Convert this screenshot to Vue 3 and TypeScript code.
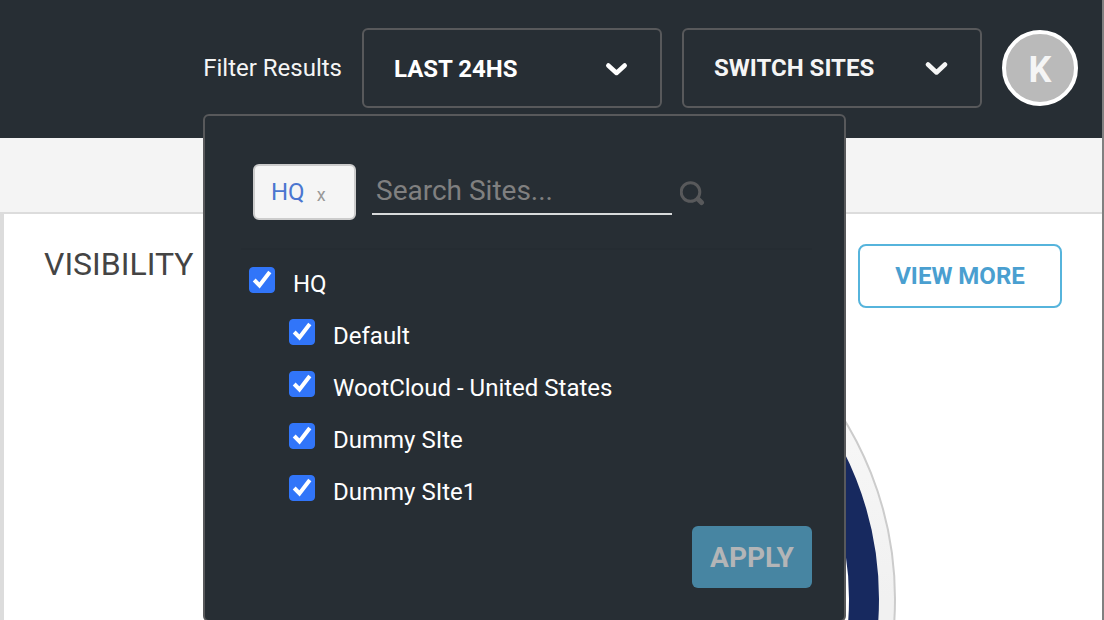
<script setup lang="ts">
import { computed, ref } from 'vue'

interface Site {
  id: string
  name: string
  nested: boolean
  checked: boolean
}

const sites = ref<Site[]>([
  { id: 'hq', name: 'HQ', nested: false, checked: true },
  { id: 'default', name: 'Default', nested: true, checked: true },
  { id: 'wootcloud', name: 'WootCloud - United States', nested: true, checked: true },
  { id: 'dummy', name: 'Dummy SIte', nested: true, checked: true },
  { id: 'dummy1', name: 'Dummy SIte1', nested: true, checked: true },
])
const query = ref('')
const selected = ref(['HQ'])
const visibleSites = computed(() =>
  sites.value.filter((s) => s.name.toLowerCase().includes(query.value.toLowerCase())),
)

function removeTag(tag: string): void {
  selected.value = selected.value.filter((t) => t !== tag)
}
</script>

<template>
  <div class="page">
    <header class="topbar">
      <span class="filter-label">Filter Results</span>
      <button type="button" class="dropdown">
        <span>LAST 24HS</span>
        <svg class="chevron" viewBox="0 0 24 16" aria-hidden="true"><path d="M4.300 4.500 L12.500 12 L20.700 4.500" /></svg>
      </button>
      <button type="button" class="dropdown sites-toggle" aria-expanded="true">
        <span>SWITCH SITES</span>
        <svg class="chevron" viewBox="0 0 24 16" aria-hidden="true"><path d="M4 4.500 L12.500 12.500 L21 4.500" /></svg>
      </button>
      <button type="button" class="avatar">K</button>

      <form class="menu" @submit.prevent>
        <div class="search-row">
          <span v-for="tag in selected" :key="tag" class="tag">
            {{ tag }}
            <button type="button" class="tag-remove" :aria-label="`Remove ${tag}`" @click="removeTag(tag)">x</button>
          </span>
          <input v-model="query" class="search" type="text" placeholder="Search Sites..." aria-label="Search Sites" />
          <svg class="magnifier" viewBox="0 0 26 26" aria-hidden="true">
            <circle cx="10.500" cy="12" r="9.300" />
            <path d="M18 19 L21.500 22.500" />
          </svg>
        </div>
        <ul class="site-list">
          <li v-for="site in visibleSites" :key="site.id" :class="{ nested: site.nested }">
            <label class="site">
              <span class="tick">
                <input v-model="site.checked" type="checkbox" />
                <svg v-if="site.checked" viewBox="0 0 26 26" aria-hidden="true"><path d="M5.200 13 L10.500 18.500 L20.800 5" /></svg>
              </span>
              <span class="site-name">{{ site.name }}</span>
            </label>
          </li>
        </ul>
        <button type="submit" class="apply">APPLY</button>
      </form>
    </header>

    <div class="subbar"></div>

    <main class="card">
      <div class="card-head">
        <h1>VISIBILITY</h1>
        <button type="button" class="view-more">VIEW MORE</button>
      </div>
      <svg class="chart" viewBox="0 0 686 686" aria-hidden="true">
        <defs>
          <linearGradient id="ring" x1="0" y1="0" x2="0" y2="1">
            <stop offset="0" stop-color="#fcfcfc" />
            <stop offset="0.5" stop-color="#f1f1f1" />
          </linearGradient>
        </defs>
        <circle cx="343" cy="343" r="342" fill="url(#ring)" stroke="#cccccc" stroke-width="2" />
        <circle cx="343" cy="343" r="311" fill="#ffffff" stroke="#17295f" stroke-width="30" />
      </svg>
    </main>
  </div>
</template>

<style>
body {
  margin: 0;
}
</style>

<style scoped>
* {
  box-sizing: border-box;
}

.page {
  display: flex;
  flex-direction: column;
  height: 100vh;
  overflow: hidden;
  border-right: 2px solid #808080;
  background: #ffffff;
  font-family: Roboto, 'Liberation Sans', sans-serif;
  font-size: 24px;
}

button,
input {
  margin: 0;
  font-family: inherit;
}

button {
  cursor: pointer;
}

.topbar {
  position: relative;
  z-index: 1;
  flex: none;
  display: flex;
  justify-content: flex-end;
  align-items: flex-start;
  gap: 20px;
  padding: 28px 24px 30px;
  background: #272e34;
  color: #f5f5f5;
}

.filter-label {
  line-height: 80px;
}

.dropdown {
  display: flex;
  justify-content: space-between;
  align-items: center;
  width: 300px;
  height: 80px;
  padding: 2px 32px 0 30px;
  border: 2px solid #58595b;
  border-radius: 6px;
  background: transparent;
  color: #ffffff;
  font-size: 24px;
  font-weight: 700;
}

.sites-toggle {
  padding-top: 0;
  color: #f5f5f5;
}

.chevron {
  width: 24px;
  height: 16px;
  fill: none;
  stroke: currentColor;
  stroke-width: 4.5;
  stroke-linecap: round;
  stroke-linejoin: round;
}

.avatar {
  width: 76px;
  height: 76px;
  margin-top: 2px;
  padding: 4px 0 0;
  border: 4px solid #ffffff;
  border-radius: 50%;
  background: #bababa;
  color: #f5f5f5;
  font-size: 36px;
  font-weight: 700;
}

.menu {
  position: absolute;
  top: 114px;
  right: 256px;
  display: flex;
  flex-direction: column;
  width: 643px;
  padding: 48px 32px 32px;
  border: 2px solid #58595b;
  border-radius: 6px;
  background: #272e34;
}

.search-row {
  display: flex;
  align-items: flex-start;
  margin-left: 4px;
  padding: 0 0 28px 12px;
  border-bottom: 2px solid #252c32;
}

.tag {
  display: flex;
  align-items: center;
  gap: 8px;
  width: 103px;
  height: 56px;
  margin-right: 16px;
  padding-left: 16px;
  border: 2px solid #cccccc;
  border-radius: 6px;
  background: #f5f5f5;
  color: #4a76d0;
}

.tag-remove {
  padding: 4px 4px 0;
  border: 0;
  background: transparent;
  color: #999999;
  font-size: 18px;
}

.search {
  width: 300px;
  height: 51px;
  padding: 4px 4px 0;
  border: 0;
  border-bottom: 2px solid #d8dadb;
  border-radius: 0;
  outline: 0;
  background: transparent;
  color: #f5f5f5;
  font-size: 28px;
}

.search::placeholder {
  color: #808080;
  opacity: 1;
}

.magnifier {
  width: 26px;
  height: 26px;
  margin: 16px 0 0 8px;
  fill: none;
  stroke: #58595b;
  stroke-width: 3;
}

.magnifier path {
  stroke-width: 5;
  stroke-linecap: round;
}

.site-list {
  margin: 8px 0;
  padding: 0 0 0 12px;
  list-style: none;
}

.site-list li {
  height: 52px;
}

.site-list .nested {
  padding-left: 40px;
}

.site {
  display: inline-flex;
  align-items: flex-start;
  gap: 18px;
  padding-top: 9px;
  color: #ffffff;
}

.tick {
  display: grid;
  width: 26px;
  height: 26px;
}

.tick input,
.tick svg {
  grid-area: 1 / 1;
  width: 26px;
  height: 26px;
}

.tick input {
  appearance: none;
  border: 1px solid #3175f9;
  border-radius: 4px;
  background: #ffffff;
}

.tick input:checked {
  background: #3175f9;
}

.tick svg {
  position: relative;
  fill: none;
  stroke: #ffffff;
  stroke-width: 4;
  pointer-events: none;
}

.site-name {
  line-height: 34px;
}

.apply {
  align-self: flex-end;
  width: 120px;
  height: 62px;
  padding: 0;
  border: 0;
  border-radius: 6px;
  background: #4785a2;
  color: #b3b5b7;
  font-size: 28px;
  font-weight: 700;
}

.subbar {
  flex: none;
  height: 76px;
  border-bottom: 2px solid #dcdcdc;
  background: #f4f4f4;
}

.card {
  flex: 1;
  min-height: 0;
  padding: 30px 40px 0;
  border-left: 4px solid #dcdcdc;
}

.card-head {
  display: flex;
  justify-content: space-between;
  align-items: flex-start;
}

h1 {
  margin: 0;
  color: #444444;
  font-size: 32px;
  font-weight: 400;
  line-height: 40px;
}

.view-more {
  width: 204px;
  height: 64px;
  padding: 0;
  border: 2px solid #56b4dc;
  border-radius: 8px;
  background: #ffffff;
  color: #4a9fd0;
  font-size: 24px;
  font-weight: 700;
}

.chart {
  display: block;
  width: 686px;
  height: 686px;
  margin: -52px auto 0;
}
</style>
